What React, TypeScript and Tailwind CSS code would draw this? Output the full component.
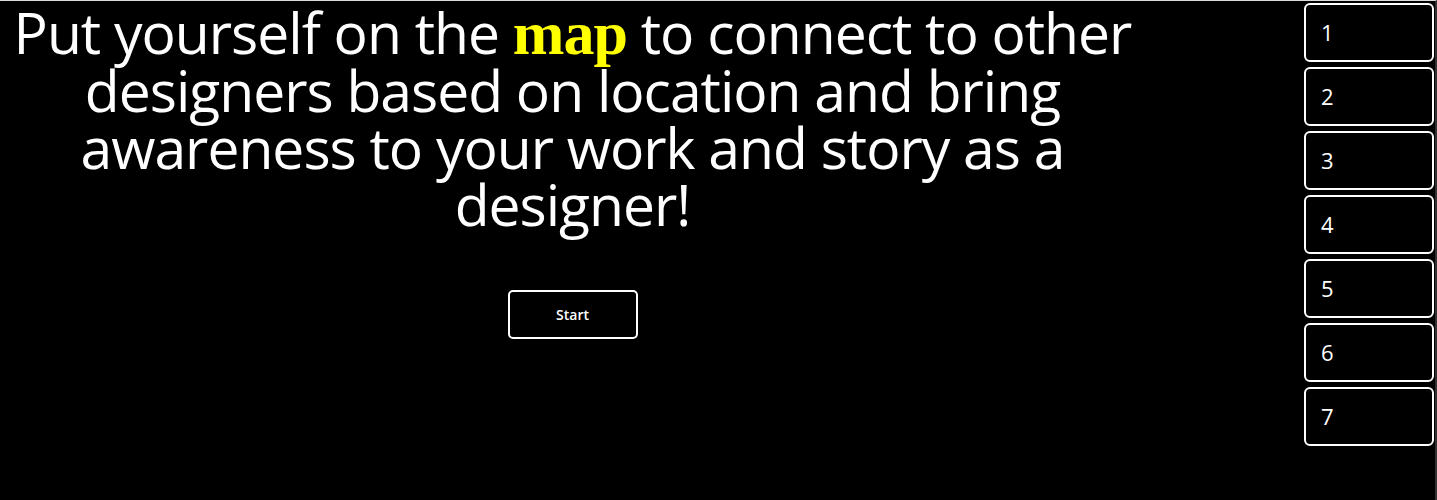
const steps = [1, 2, 3, 4, 5, 6, 7];

export default function App() {
  return (
    <div
      className="flex h-[500px] w-full bg-black text-white border-t border-[#dcdcdc] border-r-2 border-r-[#333333] overflow-hidden"
      style={{ fontFamily: '"Open Sans", "Noto Sans", sans-serif' }}
    >
      {/* Intro */}
      <main className="w-[1145px] shrink-0 flex flex-col items-center pt-[3px]">
        <h1 className="text-center text-[57px] leading-[57px] whitespace-nowrap tracking-[-1px] font-medium">
          Put yourself on the{" "}
          <span
            className="text-[#ffff00] font-bold text-[62px] leading-[57px]"
            style={{ fontFamily: '"Liberation Serif", "DejaVu Serif", serif' }}
          >
            map
          </span>{" "}
          to connect to other
          <br />
          designers based on location and bring
          <br />
          awareness to your work and story as a
          <br />
          designer!
        </h1>
        <button className="mt-[57px] w-[130px] h-[49px] rounded-[5px] border-2 border-white text-[14px] font-semibold">
          Start
        </button>
      </main>

      {/* Steps */}
      <aside className="flex-1 flex flex-col items-end gap-[5px] pt-[2px] pr-[1px]">
        {steps.map((n) => (
          <div
            key={n}
            className="w-[130px] h-[59px] rounded-[6px] border-2 border-white flex items-center pl-[15px] text-[22px] font-medium"
          >
            {n}
          </div>
        ))}
      </aside>
    </div>
  );
}
